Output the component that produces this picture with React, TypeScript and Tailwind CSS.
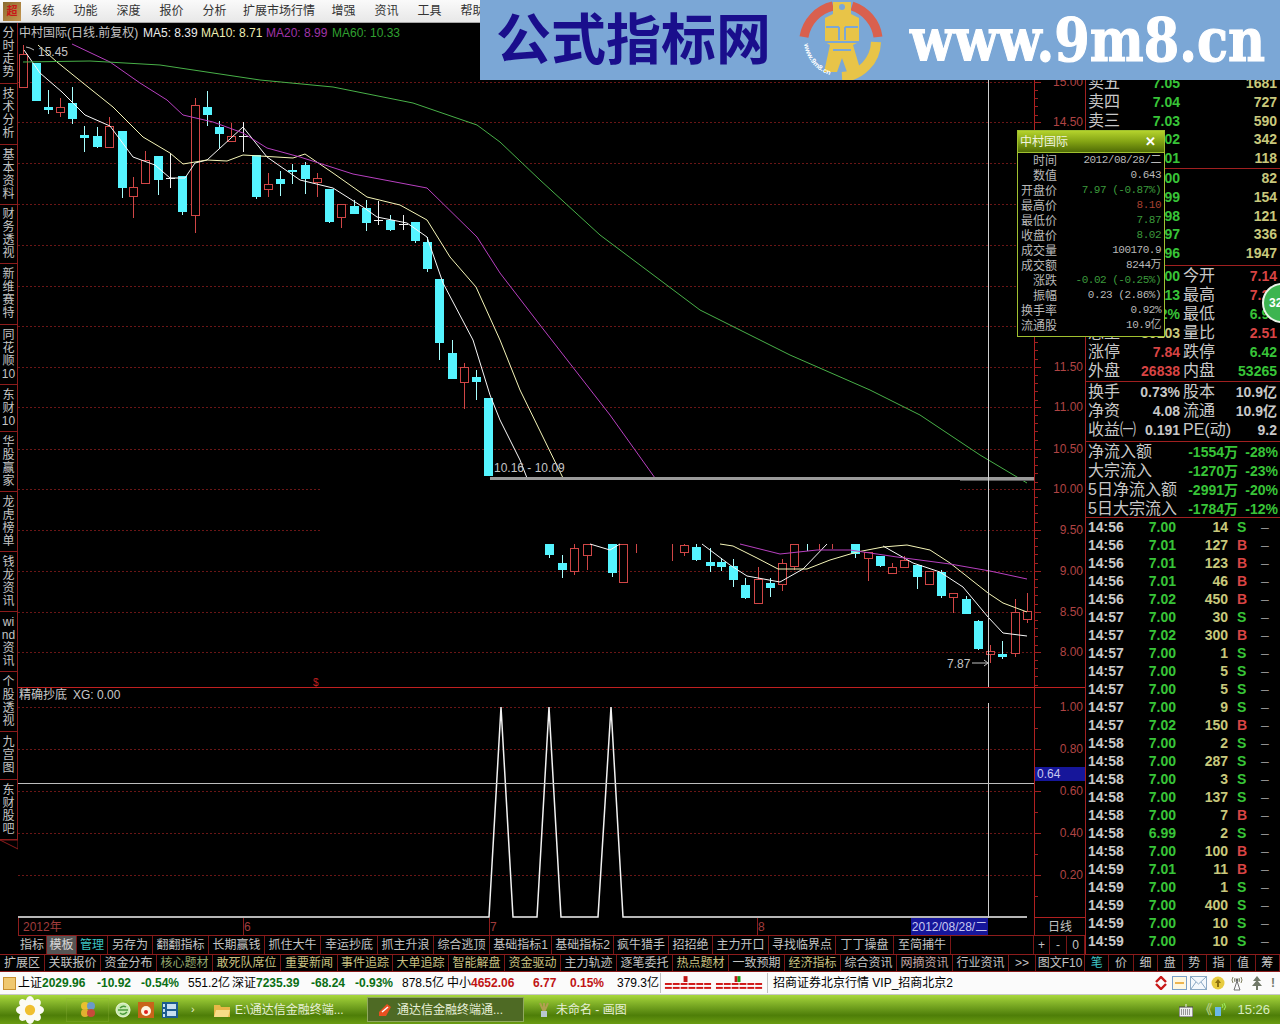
const menus = [
  { label: "系统", w: "w-[43px]" },
  { label: "功能", w: "w-[43px]" },
  { label: "深度", w: "w-[43px]" },
  { label: "报价", w: "w-[43px]" },
  { label: "分析", w: "w-[43px]" },
  { label: "扩展市场行情", w: "w-[86px]" },
  { label: "增强", w: "w-[43px]" },
  { label: "资讯", w: "w-[43px]" },
  { label: "工具", w: "w-[43px]" },
  { label: "帮助", w: "w-[43px]" },
];

const sideTabs = [
  { rows: ["分", "时", "走", "势"], h: "h-[61px]" },
  { rows: ["技", "术", "分", "析"], h: "h-[61px]" },
  { rows: ["基", "本", "资", "料"], h: "h-[60px]" },
  { rows: ["财", "务", "透", "视"], h: "h-[59px]" },
  { rows: ["新", "维", "赛", "特"], h: "h-[61px]" },
  { rows: ["同", "花", "顺", "10"], h: "h-[60px]" },
  { rows: ["东", "财", "10"], h: "h-[47px]" },
  { rows: ["华", "股", "赢", "家"], h: "h-[60px]" },
  { rows: ["龙", "虎", "榜", "单"], h: "h-[60px]" },
  { rows: ["钱", "龙", "资", "讯"], h: "h-[60px]" },
  { rows: ["wi", "nd", "资", "讯"], h: "h-[60px]" },
  { rows: ["个", "股", "透", "视"], h: "h-[60px]" },
  { rows: ["九", "宫", "图"], h: "h-[48px]" },
  { rows: ["东", "财", "股", "吧"], h: "h-[60px]" },
];

// x, high, body top, body bottom, low, kind
type Candle = [number, number, number, number, number, "c" | "r" | "d"];
const candles: Candle[] = [
  [23, 45, 54, 87, 87, "r"],
  [36, 63, 63, 101, 101, "c"],
  [48, 90, 107, 110, 114, "c"],
  [60, 98, 107, 112, 117, "r"],
  [72, 87, 103, 119, 124, "c"],
  [84, 126, 135, 138, 152, "c"],
  [97, 127, 136, 147, 148, "c"],
  [109, 117, 126, 147, 147, "r"],
  [122, 131, 131, 188, 198, "c"],
  [133, 177, 187, 196, 218, "r"],
  [145, 151, 160, 183, 183, "r"],
  [158, 156, 156, 180, 195, "c"],
  [170, 153, 178, 178, 188, "d"],
  [182, 176, 176, 212, 215, "c"],
  [195, 98, 105, 215, 233, "r"],
  [207, 91, 107, 115, 126, "c"],
  [219, 121, 127, 134, 148, "c"],
  [231, 123, 136, 141, 141, "r"],
  [243, 122, 136, 136, 152, "d"],
  [256, 155, 155, 197, 199, "c"],
  [268, 173, 184, 189, 197, "r"],
  [280, 171, 179, 184, 196, "c"],
  [292, 164, 170, 172, 184, "c"],
  [305, 162, 165, 179, 194, "c"],
  [317, 173, 178, 182, 197, "r"],
  [329, 189, 189, 222, 223, "c"],
  [341, 204, 204, 217, 228, "r"],
  [354, 200, 206, 214, 214, "c"],
  [366, 200, 208, 223, 231, "c"],
  [378, 201, 220, 220, 225, "d"],
  [390, 215, 220, 230, 231, "c"],
  [403, 215, 224, 224, 230, "d"],
  [415, 222, 222, 241, 243, "c"],
  [427, 237, 242, 269, 272, "c"],
  [439, 279, 279, 343, 360, "c"],
  [452, 340, 353, 379, 379, "c"],
  [464, 363, 367, 382, 409, "r"],
  [476, 370, 377, 382, 400, "c"],
  [488, 398, 398, 476, 476, "c"],
  [549, 544, 544, 555, 558, "c"],
  [562, 555, 563, 570, 578, "c"],
  [574, 544, 548, 571, 575, "r"],
  [587, 544, 544, 555, 570, "r"],
  [612, 544, 544, 573, 577, "c"],
  [623, 544, 544, 582, 582, "r"],
  [636, 544, 553, 553, 553, "r"],
  [672, 544, 561, 561, 561, "r"],
  [684, 544, 545, 552, 556, "r"],
  [696, 544, 547, 560, 561, "c"],
  [710, 548, 562, 566, 572, "c"],
  [721, 558, 562, 567, 571, "c"],
  [733, 559, 566, 580, 587, "c"],
  [745, 578, 585, 598, 599, "c"],
  [758, 567, 579, 603, 603, "r"],
  [770, 578, 583, 588, 597, "c"],
  [782, 559, 563, 584, 591, "r"],
  [794, 544, 544, 566, 570, "r"],
  [807, 544, 551, 551, 551, "c"],
  [819, 544, 550, 550, 550, "r"],
  [832, 544, 549, 549, 549, "r"],
  [855, 544, 544, 554, 558, "c"],
  [868, 552, 552, 558, 581, "r"],
  [880, 556, 556, 566, 567, "c"],
  [892, 563, 567, 573, 573, "r"],
  [904, 556, 560, 567, 567, "r"],
  [917, 565, 565, 577, 589, "c"],
  [929, 571, 571, 584, 584, "r"],
  [941, 570, 572, 596, 598, "c"],
  [953, 593, 593, 597, 613, "r"],
  [966, 596, 599, 614, 614, "c"],
  [978, 620, 621, 649, 650, "c"],
  [990, 645, 651, 654, 663, "r"],
  [1002, 641, 654, 657, 659, "c"],
  [1015, 599, 612, 653, 657, "r"],
  [1027, 593, 611, 619, 623, "r"],
];

const maLines = [
  {
    color: "#f8f8f8",
    points:
      "24,50 40,73 62,92 85,115 110,126 133,157 155,165 170,178 185,178 195,163 207,160 243,127 267,157 300,180 333,188 363,207 377,217 407,223 427,237 443,283 473,340 490,395 500,420 520,460 527,478",
  },
  {
    color: "#f8f8f8",
    points: "590,544 610,550 620,544",
  },
  {
    color: "#f8f8f8",
    points: "702,544 730,565 747,576 780,582 803,569 827,544",
  },
  {
    color: "#f8f8f8",
    points: "883,546 913,563 940,572 963,587 988,617 1003,633 1027,636",
  },
  {
    color: "#f6f6b8",
    points:
      "38,45 57,62 83,83 113,107 143,137 170,153 183,164 207,160 227,161 243,155 293,158 305,154 333,173 367,197 400,205 427,220 450,257 476,287 500,340 520,390 563,478",
  },
  {
    color: "#f6f6b8",
    points:
      "720,544 733,546 757,558 778,569 807,569 830,560 857,552 883,547 907,545 930,550 950,563 988,593 1003,603 1027,612",
  },
  {
    color: "#b840c0",
    points:
      "72,44 110,62 140,83 167,100 183,115 213,122 243,133 267,148 300,157 353,174 427,188 477,237 500,273 540,325 610,415 655,478",
  },
  {
    color: "#b840c0",
    points: "740,544 780,554 817,550 850,550 897,557 950,564 990,571 1027,579",
  },
  {
    color: "#48b048",
    points:
      "23,62 90,61 160,65 260,80 333,87 413,103 477,125 500,142 540,180 600,235 660,280 700,310 790,355 870,390 920,415 980,455 1027,483",
  },
];

const priceAxis = [
  ["15.00", 82],
  ["14.50", 122],
  ["14.00", 163],
  ["13.50", 204],
  ["13.00", 245],
  ["12.50", 286],
  ["12.00", 326],
  ["11.50", 367],
  ["11.00", 407],
  ["10.50", 449],
  ["10.00", 489],
  ["9.50", 530],
  ["9.00", 571],
  ["8.50", 612],
  ["8.00", 652],
] as const;

const lowerAxis = [
  ["1.00", 707],
  ["0.80", 749],
  ["0.60", 791],
  ["0.40", 833],
  ["0.20", 875],
] as const;

const toolButtons = [
  { label: "指标", w: "w-[29px]" },
  { label: "模板", w: "w-[30px]", cls: "bg-[#555555] text-[#d8d8d8]" },
  { label: "管理", w: "w-[31px]", cls: "text-[#3ec4c4]" },
  { label: "另存为", w: "w-[45px]" },
  { label: "翻翻指标", w: "w-[56px]" },
  { label: "长期赢钱", w: "w-[56px]" },
  { label: "抓住大牛", w: "w-[56px]" },
  { label: "幸运抄底", w: "w-[57px]" },
  { label: "抓主升浪", w: "w-[56px]" },
  { label: "综合逃顶", w: "w-[56px]" },
  { label: "基础指标1", w: "w-[62px]" },
  { label: "基础指标2", w: "w-[62px]" },
  { label: "疯牛猎手", w: "w-[55px]" },
  { label: "招招绝", w: "w-[44px]" },
  { label: "主力开口", w: "w-[56px]" },
  { label: "寻找临界点", w: "w-[67px]" },
  { label: "丁丁操盘", w: "w-[58px]" },
  { label: "至简捕牛", w: "w-[57px]" },
  { label: "", w: "w-[83px]" },
  { label: "+", w: "w-[16px]" },
  { label: "-", w: "w-[17px]" },
  { label: "0", w: "w-[18px]" },
];

const bottomTabs = [
  { label: "扩展区", w: "w-[45px]", cls: "text-[#c4c4c4]" },
  { label: "关联报价", w: "w-[56px]", cls: "text-[#c4c4c4]" },
  { label: "资金分布", w: "w-[56px]", cls: "text-[#c4c4c4]" },
  { label: "核心题材", w: "w-[56px]", cls: "text-[#93a56e]" },
  { label: "敢死队席位", w: "w-[68px]", cls: "text-[#c8c080]" },
  { label: "重要新闻", w: "w-[57px]", cls: "text-[#c8c080]" },
  { label: "事件追踪", w: "w-[55px]", cls: "text-[#c8c080]" },
  { label: "大单追踪", w: "w-[56px]", cls: "text-[#c8c080]" },
  { label: "智能解盘", w: "w-[56px]", cls: "text-[#c8c080]" },
  { label: "资金驱动", w: "w-[56px]", cls: "text-[#c8c080]" },
  { label: "主力轨迹", w: "w-[56px]", cls: "text-[#c4c4c4]" },
  { label: "逐笔委托", w: "w-[56px]", cls: "text-[#c4c4c4]" },
  { label: "热点题材", w: "w-[56px]", cls: "text-[#c8c080]" },
  { label: "一致预期", w: "w-[56px]", cls: "text-[#c4c4c4]" },
  { label: "经济指标", w: "w-[56px]", cls: "text-[#c8c080]" },
  { label: "综合资讯", w: "w-[56px]", cls: "text-[#c4c4c4]" },
  { label: "网摘资讯", w: "w-[56px]", cls: "text-[#c4a8a8]" },
  { label: "行业资讯", w: "w-[56px]", cls: "text-[#c4c4c4]" },
  { label: ">>", w: "w-[27px]", cls: "text-[#c4c4c4]" },
  { label: "图文F10", w: "w-[49px]", cls: "text-[#c4c4c4]" },
];

const viewTabs = ["笔", "价", "细", "盘", "势", "指", "值", "筹"];

const sellRows = [
  ["卖五", "7.05", "1681"],
  ["卖四", "7.04", "727"],
  ["卖三", "7.03", "590"],
  ["卖二", "7.02", "342"],
  ["卖一", "7.01", "118"],
];
const buyRows = [
  ["买一", "7.00", "82"],
  ["买二", "6.99", "154"],
  ["买三", "6.98", "121"],
  ["买四", "6.97", "336"],
  ["买五", "6.96", "1947"],
];

const RED = "text-[#d84444]";
const GREEN = "text-[#38c438]";
const GREY = "text-[#c8c8c8]";
const YELLOW = "text-[#c8c87c]";

const statRows = [
  ["现价", "7.00", GREEN, "今开", "7.14", RED],
  ["涨跌", "-0.13", GREEN, "最高", "7.25", RED],
  ["涨幅", "-1.82%", GREEN, "最低", "6.95", GREEN],
  ["总量", "80103", YELLOW, "量比", "2.51", RED],
  ["涨停", "7.84", RED, "跌停", "6.42", GREEN],
  ["外盘", "26838", RED, "内盘", "53265", GREEN],
];

const financeRows = [
  ["换手", "0.73%", "股本", "10.9亿"],
  ["净资", "4.08", "流通", "10.9亿"],
  ["收益㈠", "0.191", "PE(动)", "9.2"],
];

const flowRows = [
  ["净流入额", "-1554万", "-28%"],
  ["大宗流入", "-1270万", "-23%"],
  ["5日净流入额", "-2991万", "-20%"],
  ["5日大宗流入", "-1784万", "-12%"],
];

const ticks = [
  ["14:56", "7.00", "14", "S"],
  ["14:56", "7.01", "127", "B"],
  ["14:56", "7.01", "123", "B"],
  ["14:56", "7.01", "46", "B"],
  ["14:56", "7.02", "450", "B"],
  ["14:57", "7.00", "30", "S"],
  ["14:57", "7.02", "300", "B"],
  ["14:57", "7.00", "1", "S"],
  ["14:57", "7.00", "5", "S"],
  ["14:57", "7.00", "5", "S"],
  ["14:57", "7.00", "9", "S"],
  ["14:57", "7.02", "150", "B"],
  ["14:58", "7.00", "2", "S"],
  ["14:58", "7.00", "287", "S"],
  ["14:58", "7.00", "3", "S"],
  ["14:58", "7.00", "137", "S"],
  ["14:58", "7.00", "7", "B"],
  ["14:58", "6.99", "2", "S"],
  ["14:58", "7.00", "100", "B"],
  ["14:59", "7.01", "11", "B"],
  ["14:59", "7.00", "1", "S"],
  ["14:59", "7.00", "400", "S"],
  ["14:59", "7.00", "10", "S"],
  ["14:59", "7.00", "10", "S"],
];

const popupRows = [
  ["时间", "2012/08/28/二", "text-[#b8b8b8]", true],
  ["数值", "0.643", "text-[#b8b8b8]", true],
  ["开盘价", "7.97 (-0.87%)", "text-[#3c9a3c]", false],
  ["最高价", "8.10", "text-[#a84030]", false],
  ["最低价", "7.87", "text-[#3c9a3c]", false],
  ["收盘价", "8.02", "text-[#3c9a3c]", false],
  ["成交量", "100170.9", "text-[#b8b8b8]", false],
  ["成交额", "8244万", "text-[#b8b8b8]", false],
  ["涨跌", "-0.02 (-0.25%)", "text-[#3c9a3c]", true],
  ["振幅", "0.23 (2.86%)", "text-[#b8b8b8]", true],
  ["换手率", "0.92%", "text-[#b8b8b8]", false],
  ["流通股", "10.9亿", "text-[#b8b8b8]", false],
] as const;

const marketCells = [
  { t: "上证", w: "w-[24px]", c: "text-black" },
  { t: "2029.96", w: "w-[55px]", c: "font-bold text-[#0a6e14]" },
  { t: "-10.92", w: "w-[44px]", c: "font-bold text-[#0a6e14]" },
  { t: "-0.54%", w: "w-[47px]", c: "font-bold text-[#0a6e14]" },
  { t: "551.2亿", w: "w-[44px]", c: "text-black" },
  { t: "深证", w: "w-[24px]", c: "text-black" },
  { t: "7235.39", w: "w-[55px]", c: "font-bold text-[#0a6e14]" },
  { t: "-68.24", w: "w-[44px]", c: "font-bold text-[#0a6e14]" },
  { t: "-0.93%", w: "w-[47px]", c: "font-bold text-[#0a6e14]" },
  { t: "878.5亿", w: "w-[45px]", c: "text-black" },
  { t: "中小", w: "w-[24px]", c: "text-black" },
  { t: "4652.06", w: "w-[62px]", c: "font-bold text-[#c01414]" },
  { t: "6.77", w: "w-[37px]", c: "font-bold text-[#c01414]" },
  { t: "0.15%", w: "w-[47px]", c: "font-bold text-[#c01414]" },
  { t: "379.3亿", w: "w-[45px]", c: "text-black" },
];

const GRID = "#6a1616";

function Chart() {
  return (
    <svg
      viewBox="18 23 1067 895"
      className="block h-[895px] w-[1067px] text-[12px]"
      shapeRendering="crispEdges"
    >
      {priceAxis.map(([, y]) => {
        // the blacked out strip hides the middle of these two grid lines
        if (y === 489 || y === 530) {
          return (
            <g key={y} stroke={GRID} strokeDasharray="2 2">
              <line x1={18} x2={320} y1={y + 0.5} y2={y + 0.5} />
              <line x1={960} x2={1034} y1={y + 0.5} y2={y + 0.5} />
            </g>
          );
        }
        return (
          <line
            key={y}
            x1={18}
            x2={1034}
            y1={y + 0.5}
            y2={y + 0.5}
            stroke={GRID}
            strokeDasharray="2 2"
          />
        );
      })}
      {lowerAxis.map(([, y]) => (
        <line
          key={y}
          x1={18}
          x2={1034}
          y1={y + 0.5}
          y2={y + 0.5}
          stroke={GRID}
          strokeDasharray="2 2"
        />
      ))}

      {candles.map(([x, high, top, bottom, low, kind]) => {
        if (kind === "d") {
          return (
            <g key={x} stroke="#f0f0f0">
              <line x1={x + 0.5} x2={x + 0.5} y1={high} y2={low} />
              <line x1={x - 4} x2={x + 5} y1={top + 0.5} y2={top + 0.5} />
            </g>
          );
        }
        if (kind === "c") {
          return (
            <g key={x}>
              <line x1={x + 0.5} x2={x + 0.5} y1={high} y2={low} stroke="#a8ffff" />
              <rect x={x - 4} y={top} width={9} height={bottom - top} fill="#55f4ff" />
            </g>
          );
        }
        return (
          <g key={x} stroke="#d04646">
            <line x1={x + 0.5} x2={x + 0.5} y1={high} y2={low} />
            {bottom > top && (
              <rect
                x={x - 3.5}
                y={top + 0.5}
                width={8}
                height={bottom - top}
                fill="#000"
              />
            )}
          </g>
        );
      })}

      <g shapeRendering="auto" fill="none" strokeWidth={1}>
        {maLines.map((line, i) => (
          <polyline key={i} points={line.points} stroke={line.color} />
        ))}
        <polyline
          points="18,917 489,917 501,707 513,917 537,917 549,707 561,917 598,917 611,707 623,917 1027,917"
          stroke="#f2f2f2"
          strokeWidth={1.5}
        />
        <polyline points="26,47 30,48 34,50" stroke="#c0c0c0" />
        <polyline points="972,663 988,663" stroke="#c0c0c0" />
        <polyline points="984,660 988,663 984,666" stroke="#c0c0c0" />
      </g>

      {/* gray price band */}
      <rect x={490} y={477} width={544} height={3} fill="#9a9a9a" />
      <rect x={960} y={480} width={74} height={1} fill="#5a5a5a" />

      {/* crosshair */}
      <line x1={988.5} x2={988.5} y1={23} y2={687} stroke="#cfcfcf" />
      <line x1={988.5} x2={988.5} y1={703} y2={918} stroke="#cfcfcf" />
      <line x1={18} x2={1034} y1={783.5} y2={783.5} stroke="#bdbdbd" />

      {/* panel frame */}
      <line x1={18} x2={1085} y1={687.5} y2={687.5} stroke="#c02020" />
      <line x1={1034.5} x2={1034.5} y1={23} y2={918} stroke="#b02020" />
      <line x1={1034} x2={1085} y1={917.5} y2={917.5} stroke="#b02020" />

      {priceAxis.map(([label, y]) => (
        <g key={label}>
          {[0, 8, 16, 24, 33].map((d) => (
            <line
              key={d}
              x1={1034}
              x2={d === 0 ? 1041 : 1038}
              y1={y + d + 0.5}
              y2={y + d + 0.5}
              stroke="#a02020"
            />
          ))}
          <text
            x={1083}
            y={y + 4}
            textAnchor="end"
            fill="#b04444"
            fontFamily="Liberation Sans"
            fontSize={12}
          >
            {label}
          </text>
        </g>
      ))}
      {lowerAxis.map(([label, y]) => (
        <g key={label}>
          <line x1={1034} x2={1041} y1={y + 0.5} y2={y + 0.5} stroke="#a02020" />
          <line x1={1034} x2={1038} y1={y + 21.5} y2={y + 21.5} stroke="#a02020" />
          <text
            x={1083}
            y={y + 4}
            textAnchor="end"
            fill="#b04444"
            fontFamily="Liberation Sans"
            fontSize={12}
          >
            {label}
          </text>
        </g>
      ))}
      <rect x={1035} y={767} width={50} height={14} fill="#16169a" />
      <text x={1037} y={778} fill="#c8c8f0" fontFamily="Liberation Sans" fontSize={12}>
        0.64
      </text>

      <g fontFamily="Liberation Sans" fontSize={12} fill="#c4c4c4">
        <text x={38} y={56}>
          15.45
        </text>
        <text x={494} y={472}>
          10.16 - 10.09
        </text>
        <text x={947} y={668}>
          7.87
        </text>
      </g>
      <text x={313} y={686} fill="#c02020" fontFamily="Liberation Sans" fontSize={10}>
        $
      </text>
    </svg>
  );
}

function BannerLogo() {
  return (
    <svg viewBox="0 0 95 82" className="h-[82px] w-[95px] shrink-0">
      <path d="M9 37 A38 38 0 0 1 38 6" fill="none" stroke="#d9604e" strokeWidth={9} />
      <path d="M57 6 A38 38 0 0 1 83 37" fill="none" stroke="#d9604e" strokeWidth={9} />
      <path d="M81 42 A36 36 0 0 1 47 77" fill="none" stroke="#e8c448" strokeWidth={10} />
      <path
        d="M38 2 L56 2 L56 14 L64 18 L64 42 L58 45 L66 72 L52 72 L47 58 L42 72 L29 72 L35 45 L30 42 L30 18 L38 14 Z"
        fill="#e8c448"
      />
      <circle cx={47} cy={7} r={3} fill="#7ba7d6" />
      <path
        d="M31 27 L44 27 M50 27 L63 27 M44 27 L44 40 M50 27 L50 40 M30 42 L64 42 M38 50 L56 50"
        stroke="#7ba7d6"
        strokeWidth={2}
        fill="none"
      />
      <path id="logoArc" d="M9 44 A38 38 0 0 0 38 76" fill="none" />
      <text fontSize={7} fontWeight={700} fill="#ffffff" fontFamily="Liberation Sans">
        <textPath href="#logoArc">www.9m8.cn</textPath>
      </text>
    </svg>
  );
}

function Flower() {
  return (
    <svg viewBox="0 0 30 30" className="h-[28px] w-[30px]">
      {[0, 45, 90, 135, 180, 225, 270, 315].map((a) => (
        <ellipse
          key={a}
          cx={15}
          cy={6}
          rx={4.5}
          ry={6}
          fill="#fbfbf4"
          transform={`rotate(${a} 15 15)`}
        />
      ))}
      <circle cx={15} cy={15} r={5.5} fill="#f0c030" />
    </svg>
  );
}

function QuickLaunch() {
  return (
    <div className="flex items-center">
      <div className="ml-[21px] flex h-[24px] w-[43px] items-center justify-center border border-[#8fb43a]/30">
        <svg viewBox="0 0 16 20" className="h-[20px] w-[16px]">
          <circle cx={5} cy={6} r={4} fill="#e8c030" />
          <circle cx={11} cy={6} r={4} fill="#6a9ac8" />
          <circle cx={5} cy={13} r={4} fill="#e0b030" />
          <circle cx={11} cy={13} r={4} fill="#c84a3a" />
        </svg>
      </div>
      <svg viewBox="0 0 16 16" className="ml-[6px] h-[16px] w-[16px]">
        <circle cx={8} cy={8} r={7} fill="#c8ecb0" stroke="#eef8e0" />
        <path d="M3 8 L13 8 M5 11 Q8 14 12 10 M5 6 Q8 3 11 5" stroke="#4a9a3a" strokeWidth={1.4} fill="none" />
      </svg>
      <svg viewBox="0 0 16 16" className="ml-[7px] h-[16px] w-[16px]">
        <rect width={16} height={16} fill="#c8641a" />
        <circle cx={8} cy={9} r={5} fill="#fff4e0" />
        <circle cx={8} cy={10} r={2} fill="#e02020" />
      </svg>
      <svg viewBox="0 0 16 16" className="ml-[8px] h-[16px] w-[16px]">
        <rect width={16} height={16} fill="#1c5c90" />
        <rect x={5} y={2} width={9} height={5} fill="#c8e0f0" />
        <rect x={5} y={9} width={9} height={5} fill="#c8e0f0" />
        <rect x={1} y={2} width={2} height={3} fill="#c8e0f0" />
        <rect x={1} y={7} width={2} height={3} fill="#c8e0f0" />
        <rect x={1} y={12} width={2} height={3} fill="#c8e0f0" />
      </svg>
      <span className="ml-[13px] w-[8px] text-[11px] text-[#e8f0d0]">›</span>
    </div>
  );
}

function StatusIcons() {
  return (
    <div className="ml-auto mr-[5px] flex items-center gap-[3px]">
      <svg viewBox="0 0 14 14" className="h-[14px] w-[14px]">
        <path d="M2 6 L7 1 L12 6 M12 8 L7 13 L2 8" stroke="#c81818" strokeWidth={2.4} fill="none" />
      </svg>
      <svg viewBox="0 0 15 14" className="ml-[1px] h-[14px] w-[15px]">
        <rect x={0.5} y={0.5} width={14} height={13} fill="#fff8e0" stroke="#7aa0c8" />
        <path d="M3 7 L12 7" stroke="#e8a020" strokeWidth={1.5} />
      </svg>
      <svg viewBox="0 0 17 14" className="h-[14px] w-[17px]">
        <rect x={0.5} y={0.5} width={16} height={13} fill="#f4f8fc" stroke="#8aa8c4" />
        <path d="M1 1 L8.5 8 L16 1 M1 13 L6 6 M16 13 L11 6" stroke="#8aa8c4" fill="none" />
      </svg>
      <svg viewBox="0 0 14 14" className="ml-[1px] h-[14px] w-[14px]">
        <circle cx={7} cy={7} r={6.5} fill="#e8cc40" />
        <path d="M7 3 L10 7 L8 7 L8 11 L6 11 L6 7 L4 7 Z" fill="#8a7010" />
      </svg>
      <svg viewBox="0 0 14 16" className="ml-[2px] h-[16px] w-[14px]">
        <circle cx={7} cy={5} r={1.4} fill="#666" />
        <path d="M3 2 Q1 5 3 8 M11 2 Q13 5 11 8 M5 3 Q4 5 5 7 M9 3 Q10 5 9 7" stroke="#808060" fill="none" />
        <path d="M7 6 L4 15 L10 15 Z" stroke="#707070" fill="none" />
      </svg>
      <svg viewBox="0 0 12 14" className="ml-[4px] h-[14px] w-[12px]">
        <path d="M6 0 L10 5 L2 5 Z M6 4 L11 10 L1 10 Z M5 10 L7 10 L7 14 L5 14 Z" fill="#707868" />
      </svg>
      <span className="ml-[5px] w-[4px] text-[12px] font-bold text-[#707868]">!</span>
    </div>
  );
}

function SideTabs() {
  return (
    <div className="flex w-[18px] shrink-0 flex-col">
      {sideTabs.map((tab, i) => (
        <div
          key={i}
          className={`${tab.h} flex flex-col items-center justify-center border-b border-r border-[#8c1c1c] text-[12px] leading-[13px] text-[#c4c4c4]`}
        >
          {tab.rows.map((ch) => (
            <span key={ch}>{ch}</span>
          ))}
        </div>
      ))}
      <svg viewBox="0 0 18 10" className="h-[10px] w-[18px]">
        <path d="M0 0 L18 9 L18 0 Z" fill="none" stroke="#8c1c1c" />
      </svg>
    </div>
  );
}

function Popup() {
  return (
    <div className="absolute left-[1017px] top-[130px] h-[207px] w-[148px] border border-[#a0c030] bg-black">
      <div className="flex h-[21px] items-center justify-between bg-gradient-to-b from-[#b4d22c] via-[#84a414] to-[#506c06] px-[2px] text-[12px] text-[#f0f4e0]">
        <span>中村国际</span>
        <span className="mr-[6px] text-[13px] font-bold leading-none text-white">✕</span>
      </div>
      <div className="border-t border-[#a0c030]">
        {popupRows.map(([label, value, color, indent]) => (
          <div key={label} className="flex h-[15px] items-center text-[12px] text-[#b8b8b8]">
            <span className={indent ? "ml-[15px] w-[40px]" : "ml-[3px] w-[40px]"}>{label}</span>
            <span
              className={`${color} ml-auto mr-[3px] whitespace-nowrap text-[11px] tracking-[-0.5px] [font-family:'Liberation_Mono','Noto_Sans_CJK_SC',monospace]`}
            >
              {value}
            </span>
          </div>
        ))}
      </div>
    </div>
  );
}

function QuotePanel() {
  return (
    <div className="h-[931px] w-[195px] shrink-0 overflow-hidden border-l border-[#a02020] text-[16px] leading-none text-[#c8c8c8]">
      <div className="h-[51px]" />
      <div className="h-[95px] border-b border-[#a02020]">
        {sellRows.map(([label, price, vol]) => (
          <div key={label} className="flex h-[18.7px] items-center">
            <span className="ml-[2px] w-[40px]">{label}</span>
            <span className={`w-[52px] text-right text-[14px] font-bold ${GREEN}`}>{price}</span>
            <span className={`w-[97px] text-right text-[14px] font-bold ${YELLOW}`}>{vol}</span>
          </div>
        ))}
      </div>
      <div className="h-[97px] border-b border-[#a02020]">
        {buyRows.map(([label, price, vol]) => (
          <div key={label} className="flex h-[18.7px] items-center">
            <span className="ml-[2px] w-[40px]">{label}</span>
            <span className={`w-[52px] text-right text-[14px] font-bold ${GREEN}`}>{price}</span>
            <span className={`w-[97px] text-right text-[14px] font-bold ${YELLOW}`}>{vol}</span>
          </div>
        ))}
      </div>
      <div className="h-[116px] border-b border-[#a02020]">
        {statRows.map(([a, av, ac, b, bv, bc]) => (
          <div key={a} className="flex h-[19px] items-center">
            <span className="ml-[2px] w-[40px]">{a}</span>
            <span className={`w-[52px] text-right text-[14px] font-bold ${ac}`}>{av}</span>
            <span className="ml-[3px] w-[40px]">{b}</span>
            <span className={`w-[54px] text-right text-[14px] font-bold ${bc}`}>{bv}</span>
          </div>
        ))}
      </div>
      <div className="h-[60px] border-b border-[#a02020]">
        {financeRows.map(([a, av, b, bv]) => (
          <div key={a} className="flex h-[19px] items-center">
            <span className="ml-[2px] w-[40px] whitespace-nowrap">{a}</span>
            <span className={`w-[52px] text-right text-[14px] font-bold ${GREY}`}>{av}</span>
            <span className="ml-[3px] w-[40px] whitespace-nowrap">{b}</span>
            <span className={`w-[54px] text-right text-[14px] font-bold ${GREY}`}>{bv}</span>
          </div>
        ))}
      </div>
      <div className="h-[76px] border-b border-[#a02020]">
        {flowRows.map(([label, amount, pct]) => (
          <div key={label} className="flex h-[19px] items-center">
            <span className="ml-[2px] w-[95px] whitespace-nowrap">{label}</span>
            <span className={`w-[55px] text-right text-[14px] font-bold ${GREEN}`}>{amount}</span>
            <span className={`w-[40px] text-right text-[14px] font-bold ${GREEN}`}>{pct}</span>
          </div>
        ))}
      </div>
      {ticks.map(([time, price, vol, side], i) => (
        <div key={i} className="flex h-[18px] items-center text-[14px] font-bold">
          <span className={`ml-[2px] w-[60px] ${GREY}`}>{time}</span>
          <span className={`w-[28px] text-right ${GREEN}`}>{price}</span>
          <span className={`w-[52px] text-right ${YELLOW}`}>{vol}</span>
          <span className={`ml-[9px] w-[8px] ${side === "S" ? GREEN : RED}`}>{side}</span>
          <span className="ml-[16px] w-[8px] font-normal text-[#909090]">–</span>
        </div>
      ))}
    </div>
  );
}

export default function App() {
  return (
    <div className="relative flex h-[1024px] w-[1280px] flex-col overflow-hidden bg-black [font-family:'Liberation_Sans','Noto_Sans_CJK_SC',sans-serif]">
      {/* menu */}
      <div className="flex h-[23px] shrink-0 items-center border-b border-[#a8a8a8] bg-gradient-to-b from-[#fafafa] to-[#e8e8e8] text-[12px] text-[#333333]">
        <div className="ml-[3px] flex h-[19px] w-[18px] items-center justify-center bg-gradient-to-br from-[#8a6a30] to-[#c89850] text-[11px] font-bold text-[#c81818]">
          超
        </div>
        {menus.map((m) => (
          <span key={m.label} className={`${m.w} text-center`}>
            {m.label}
          </span>
        ))}
      </div>

      <div className="flex h-[931px] shrink-0">
        <SideTabs />
        <div className="flex w-[1067px] shrink-0 flex-col">
          <div className="relative h-[895px]">
            <Chart />
            <div className="absolute left-[1px] top-[3px] flex gap-[7px] whitespace-nowrap text-[12px] leading-[14px]">
              <span className="w-[117px] text-[#c4c4c4]">中村国际(日线.前复权)</span>
              <span className="w-[51px] text-[#ececec]">MA5: 8.39</span>
              <span className="w-[58px] text-[#eeeeb4]">MA10: 8.71</span>
              <span className="w-[59px] text-[#a034a8]">MA20: 8.99</span>
              <span className="text-[#30a030]">MA60: 10.33</span>
            </div>
            <div className="absolute left-[1px] top-[665px] flex gap-[6px] whitespace-nowrap text-[12px] leading-[14px] text-[#c8c8c8]">
              <span>精确抄底</span>
              <span>XG: 0.00</span>
            </div>
          </div>
          {/* date axis */}
          <div className="flex h-[18px] shrink-0 items-center border-b border-[#8c1c1c] text-[12px] text-[#a03c3c]">
            <span className="flex h-full w-[225px] items-center border-l border-[#8c1c1c] pl-[4px]">2012年</span>
            <span className="flex h-full w-[246px] items-center border-l border-[#8c1c1c]">6</span>
            <span className="flex h-full w-[268px] items-center border-l border-[#8c1c1c]">7</span>
            <span className="flex h-full w-[154px] items-center border-l border-[#8c1c1c]">8</span>
            <span className="flex h-full w-[77px] items-center justify-center whitespace-nowrap bg-[#16169a] text-[12px] text-[#c8c8f0]">
              2012/08/28/二
            </span>
            <span className="h-full w-[46px]" />
            <span className="flex h-full w-[51px] items-center justify-center border-l border-[#a02020] text-[#c4c4c4]">
              日线
            </span>
          </div>
          {/* formula buttons */}
          <div className="flex h-[18px] shrink-0 items-center text-[12px] text-[#c4c4c4]">
            {toolButtons.map((b, i) => (
              <span
                key={i}
                className={`flex h-full ${b.w} items-center justify-center whitespace-nowrap border-r border-[#7a1616] ${b.cls ?? ""}`}
              >
                {b.label}
              </span>
            ))}
          </div>
        </div>
        <QuotePanel />
      </div>

      {/* bottom tabs */}
      <div className="flex h-[18px] shrink-0 border-y border-[#8c1c1c] text-[12px] leading-none">
        {bottomTabs.map((t) => (
          <span
            key={t.label}
            className={`flex h-full ${t.w} ${t.cls} items-center justify-center whitespace-nowrap border-r border-[#7a1616]`}
          >
            {t.label}
          </span>
        ))}
        {viewTabs.map((t, i) => (
          <span
            key={t}
            className={`flex h-full w-[24.375px] items-center justify-center border-r border-[#7a1616] ${i === 0 ? "text-[#3ec4c4]" : "text-[#c4c4c4]"}`}
          >
            {t}
          </span>
        ))}
      </div>

      {/* market status */}
      <div className="flex h-[23px] shrink-0 items-center border-b border-[#c8c8c8] bg-[#fbfbfb] text-[12px]">
        <span className="ml-[3px] mr-[2px] h-[13px] w-[13px] shrink-0 border border-[#c89030] bg-[#f0c870]" />
        {marketCells.map((c, i) => (
          <span key={i} className={`${c.w} ${c.c} shrink-0 whitespace-nowrap`}>
            {c.t}
          </span>
        ))}
        <svg viewBox="0 0 108 20" className="ml-[-2px] h-[20px] w-[108px] shrink-0 border-x border-[#c0c0c0]">
          {[0, 1, 2, 3, 4, 5].map((i) => (
            <g key={i} fill="#d01818">
              <rect x={4 + i * 8} y={10} width={7} height={2} />
              <rect x={4 + i * 8} y={14} width={7} height={2} />
              <rect x={56 + i * 8} y={10} width={7} height={2} />
              <rect x={56 + i * 8} y={14} width={7} height={2} />
            </g>
          ))}
          <rect x={23} y={3} width={4} height={6} fill="#c01818" />
          <rect x={75} y={3} width={3} height={6} fill="#c01818" />
          <rect x={78} y={3} width={3} height={6} fill="#18a018" />
        </svg>
        <span className="ml-[5px] whitespace-nowrap text-black">招商证券北京行情 VIP_招商北京2</span>
        <StatusIcons />
      </div>

      {/* taskbar */}
      <div className="flex h-[29px] shrink-0 items-center bg-gradient-to-b from-[#a8d83c] via-[#4e7e08] via-70% to-[#6a9c12] text-[12px] text-[#e8f0d8]">
        <div className="ml-[15px]">
          <Flower />
        </div>
        <QuickLaunch />
        <svg viewBox="0 0 16 14" className="ml-[15px] h-[14px] w-[16px] shrink-0">
          <path d="M0 2 L6 2 L7 4 L16 4 L16 14 L0 14 Z" fill="#e8b848" />
          <path d="M2 7 L16 7 L14 14 L0 14 Z" fill="#f8dc88" />
        </svg>
        <span className="ml-[5px] w-[126px] whitespace-nowrap">E:\通达信金融终端...</span>
        <div className="ml-[6px] flex h-[25px] w-[157px] items-center border border-[#90a860] bg-[#4e6a24] pl-[10px]">
          <svg viewBox="0 0 14 14" className="h-[14px] w-[14px] shrink-0">
            <path d="M1 9 L9 1 L13 4 L8 13 L1 13 Z" fill="#e85020" />
            <path d="M4 9 L10 4" stroke="#fff" strokeWidth={1.5} />
          </svg>
          <span className="ml-[5px] whitespace-nowrap">通达信金融终端通...</span>
        </div>
        <svg viewBox="0 0 12 16" className="ml-[14px] h-[16px] w-[12px] shrink-0">
          <path d="M2 1 L6 10 M6 1 L6 10 M10 1 L6 10" stroke="#b0a050" strokeWidth={2} />
          <rect x={3} y={9} width={6} height={6} fill="#b8c8d0" />
        </svg>
        <span className="ml-[6px] whitespace-nowrap">未命名 - 画图</span>
        <div className="ml-auto flex items-center">
          <svg viewBox="0 0 14 14" className="h-[14px] w-[14px]">
            <rect y={4} width={14} height={10} fill="#f0f0f0" stroke="#404040" />
            <path d="M2 7 H12 M2 9 H12 M2 11 H12" stroke="#404040" strokeDasharray="1 1" />
            <path d="M7 4 V1" stroke="#f0f0f0" />
          </svg>
          <span className="ml-[6px] text-[13px] font-bold text-[#b4cc80]">《</span>
          <svg viewBox="0 0 14 14" className="ml-[1px] h-[14px] w-[14px]">
            <rect x={2} y={4} width={6} height={9} fill="#6ab8e8" />
            <path d="M9 5 Q11 3 9 1 M11 7 Q14 4 11 0" stroke="#a0f060" fill="none" />
          </svg>
          <span className="ml-[10px] mr-[10px] text-[13px] text-[#d8ecc0]">15:26</span>
        </div>
      </div>

      {/* ad banner pasted over the window */}
      <div className="absolute left-[480px] top-0 flex h-[80px] w-[800px] items-center overflow-hidden bg-[#7ba7d6]">
        <span className="ml-[16px] whitespace-nowrap text-[55px] font-bold leading-none text-[#1a0e8c]">
          公式指标网
        </span>
        <div className="ml-[24px] mt-[2px]">
          <BannerLogo />
        </div>
        <span className="ml-[20px] origin-center scale-y-[1.18] whitespace-nowrap text-[51px] font-bold leading-none text-white [-webkit-text-stroke:1px_white] [font-family:'DejaVu_Serif',serif]">
          www.9m8.cn
        </span>
      </div>

      <Popup />

      {/* floating badge at the edge */}
      <div className="absolute left-[1262px] top-[283px] flex h-[40px] w-[40px] items-center rounded-full border-2 border-[#e8f4e8] bg-[#3cb450] pl-[5px] text-[12px] font-bold text-white">
        32
      </div>
    </div>
  );
}
